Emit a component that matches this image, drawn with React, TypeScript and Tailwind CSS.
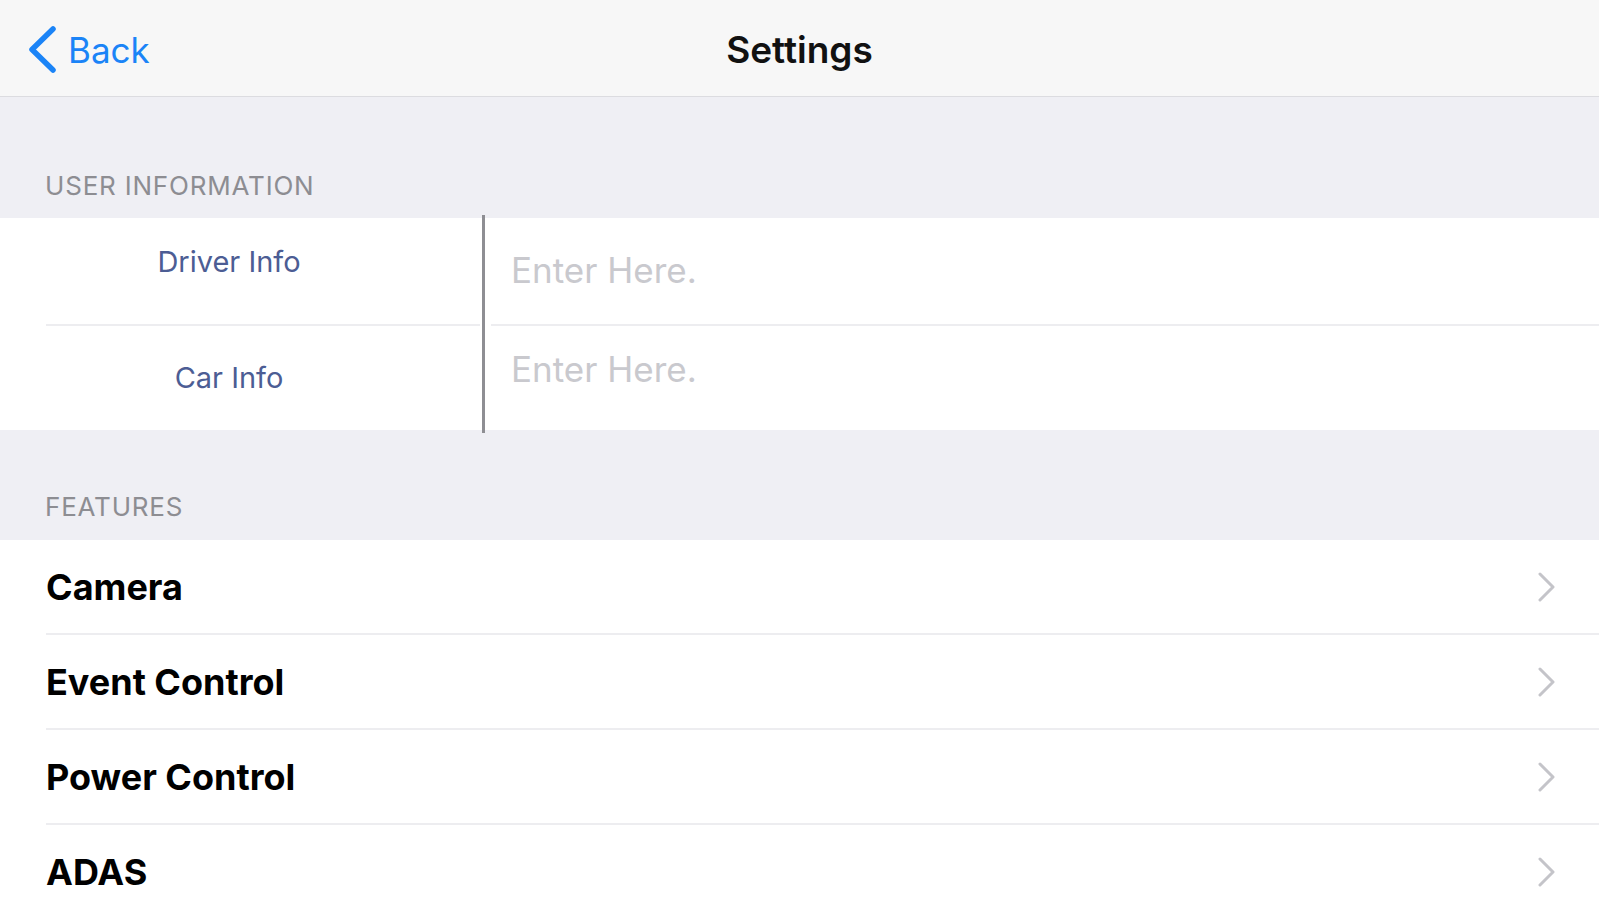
import React from 'react';

const features = ['Camera', 'Event Control', 'Power Control', 'ADAS'];

function BackChevron() {
    return (
        <svg width="32" height="48" viewBox="0 0 32 48" fill="none">
            <path d="M26 3 L5 23.5 L26 44" stroke="#1b84f7" strokeWidth="5.5" strokeLinecap="round" strokeLinejoin="round" />
        </svg>
    );
}

function RowChevron() {
    return (
        <svg width="20" height="30" viewBox="0 0 20 30" fill="none">
            <path d="M3 2 L16 15 L3 28" stroke="#c4c4c9" strokeWidth="3" strokeLinecap="round" strokeLinejoin="round" />
        </svg>
    );
}

export default function App() {
    return (
        <div className="w-[1599px] h-[900px] overflow-hidden bg-[#efeff4] font-['Inter','Liberation_Sans',sans-serif]">
            {/* nav bar */}
            <div className="h-[97px] pt-[3px] bg-[#f7f7f7] border-b border-[#dcdce0] grid grid-cols-[1fr_auto_1fr] items-center">
                <div className="flex items-center pl-[27px] gap-[9px]">
                    <BackChevron />
                    <span className="text-[35px] leading-none text-[#1b84f7] pt-[1px]">Back</span>
                </div>
                <div className="text-[37px] leading-none font-semibold text-[#111]">Settings</div>
                <div />
            </div>

            {/* user information */}
            <div className="h-[121px] flex items-end pl-[45px] pb-[19px]">
                <span className="text-[26px] leading-none text-[#8d8d92] tracking-[0.8px]">USER INFORMATION</span>
            </div>
            <div className="bg-white flex h-[212px]">
                <div className="w-[482px] flex flex-col">
                    <div className="h-[108px] flex flex-col">
                        <div className="flex-1 pt-[29px] pr-[24px] text-center text-[29px] leading-none text-[#4c5d94]">
                            Driver Info
                        </div>
                        <div className="ml-[46px] mr-[2px] h-[2px] bg-[#ededf0]" />
                    </div>
                    <div className="flex-1 pt-[37px] pr-[24px] text-center text-[29px] leading-none text-[#4c5d94]">
                        Car Info
                    </div>
                </div>
                <div className="w-[3px] bg-[#8e8e93] -mt-[3px] -mb-[3px]" />
                <div className="flex-1 flex flex-col">
                    <div className="h-[108px] flex flex-col">
                        <div className="flex-1 pt-[35px] pl-[26px] text-[35px] leading-none text-[#c9c9ce]">Enter Here.</div>
                        <div className="ml-[6px] h-[2px] bg-[#ededf0]" />
                    </div>
                    <div className="flex-1 pt-[26px] pl-[26px] text-[35px] leading-none text-[#c9c9ce]">Enter Here.</div>
                </div>
            </div>

            {/* features */}
            <div className="h-[110px] flex items-end pl-[45px] pb-[20px]">
                <span className="text-[26px] leading-none text-[#8d8d92] tracking-[0.8px]">FEATURES</span>
            </div>
            <div className="bg-white">
                {features.map((name, i) => (
                    <div key={name} className="flex flex-col">
                        <div className="h-[93px] flex items-center justify-between pl-[46px] pr-[42px]">
                            <span className="text-[36px] leading-none font-bold text-black">{name}</span>
                            <RowChevron />
                        </div>
                        {i < features.length - 1 && <div className="ml-[46px] h-[2px] bg-[#ededf0]" />}
                    </div>
                ))}
            </div>
        </div>
    );
}
